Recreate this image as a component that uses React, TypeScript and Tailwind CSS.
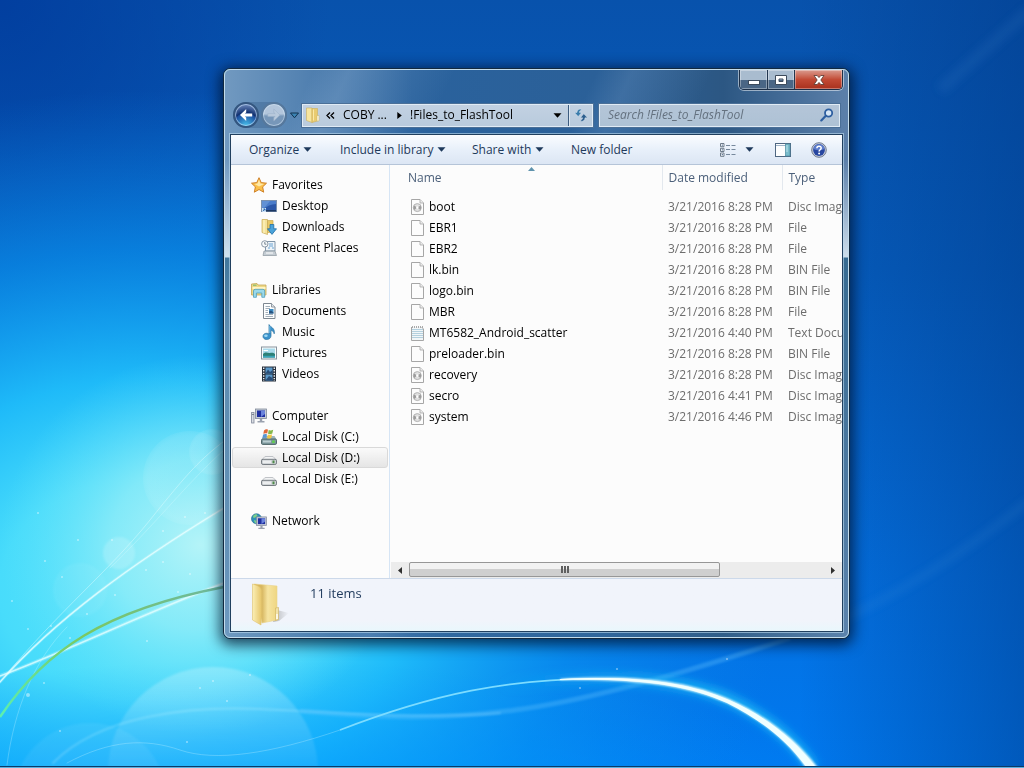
import type { ReactNode } from "react";

type FileKind = "disc" | "blank" | "text";

const files: { name: string; date: string; type: string; kind: FileKind }[] = [
	{ name: "boot", date: "3/21/2016 8:28 PM", type: "Disc Image File", kind: "disc" },
	{ name: "EBR1", date: "3/21/2016 8:28 PM", type: "File", kind: "blank" },
	{ name: "EBR2", date: "3/21/2016 8:28 PM", type: "File", kind: "blank" },
	{ name: "lk.bin", date: "3/21/2016 8:28 PM", type: "BIN File", kind: "blank" },
	{ name: "logo.bin", date: "3/21/2016 8:28 PM", type: "BIN File", kind: "blank" },
	{ name: "MBR", date: "3/21/2016 8:28 PM", type: "File", kind: "blank" },
	{ name: "MT6582_Android_scatter", date: "3/21/2016 4:40 PM", type: "Text Document", kind: "text" },
	{ name: "preloader.bin", date: "3/21/2016 8:28 PM", type: "BIN File", kind: "blank" },
	{ name: "recovery", date: "3/21/2016 8:28 PM", type: "Disc Image File", kind: "disc" },
	{ name: "secro", date: "3/21/2016 4:41 PM", type: "Disc Image File", kind: "disc" },
	{ name: "system", date: "3/21/2016 4:46 PM", type: "Disc Image File", kind: "disc" },
];

const sparks = [
	[163, 531, 1], [112, 540, 1], [190, 574, 1], [146, 570, 1], [115, 595, 1],
	[178, 592, 1], [62, 577, 1], [45, 561, 1], [78, 540, 1], [28, 629, 1],
	[51, 626, 1], [70, 638, 1], [147, 641, 1], [213, 681, 1], [200, 688, 1],
	[28, 695, 2], [44, 683, 1], [187, 742, 1], [227, 701, 1], [250, 675, 1],
	[87, 614, 1], [38, 513, 1], [185, 517, 1], [617, 669, 1], [727, 659, 1],
	[580, 688, 1], [12, 601, 1], [163, 562, 1], [205, 513, 1], [60, 731, 1],
];

function Wallpaper() {
	return (
		<svg
			className="absolute inset-0 h-full w-full"
			viewBox="0 0 1024 768"
			preserveAspectRatio="none"
			aria-hidden="true"
		>
			<defs>
				<linearGradient id="sky" x1="0" y1="0" x2="0" y2="1">
					<stop offset="0" stopColor="#0852ac" />
					<stop offset="0.35" stopColor="#065cbc" />
					<stop offset="0.75" stopColor="#0470e0" />
					<stop offset="1" stopColor="#0079f0" />
				</linearGradient>
				<linearGradient id="edge" x1="0" y1="0" x2="1" y2="0">
					<stop offset="0.78" stopColor="#003a88" stopOpacity="0" />
					<stop offset="1" stopColor="#003a88" stopOpacity="0.5" />
				</linearGradient>
				<radialGradient id="corner" gradientUnits="userSpaceOnUse" cx="0" cy="0" r="330">
					<stop offset="0" stopColor="#003a9c" stopOpacity="0.8" />
					<stop offset="1" stopColor="#003a9c" stopOpacity="0" />
				</radialGradient>
				<radialGradient
					id="cyan"
					gradientUnits="userSpaceOnUse"
					cx="0"
					cy="0"
					r="1"
					gradientTransform="translate(140 590) scale(640 500)"
				>
					<stop offset="0" stopColor="#5ce6fb" />
					<stop offset="0.22" stopColor="#48dcfb" />
					<stop offset="0.42" stopColor="#20bffb" stopOpacity="0.95" />
					<stop offset="0.68" stopColor="#0a93f0" stopOpacity="0.65" />
					<stop offset="1" stopColor="#0a80e8" stopOpacity="0" />
				</radialGradient>
				<radialGradient
					id="base"
					gradientUnits="userSpaceOnUse"
					cx="0"
					cy="0"
					r="1"
					gradientTransform="translate(260 840) scale(640 180)"
				>
					<stop offset="0" stopColor="#00a4ff" stopOpacity="0.9" />
					<stop offset="1" stopColor="#0090ff" stopOpacity="0" />
				</radialGradient>
				<radialGradient
					id="glow"
					gradientUnits="userSpaceOnUse"
					cx="0"
					cy="0"
					r="1"
					gradientTransform="translate(200 545) scale(200 190)"
				>
					<stop offset="0" stopColor="#b4f4f8" />
					<stop offset="0.45" stopColor="#94edf8" stopOpacity="0.75" />
					<stop offset="1" stopColor="#5cdffb" stopOpacity="0" />
				</radialGradient>
				<radialGradient id="orb">
					<stop offset="0" stopColor="#fff" stopOpacity="0.04" />
					<stop offset="0.9" stopColor="#fff" stopOpacity="0.1" />
					<stop offset="1" stopColor="#fff" stopOpacity="0.06" />
				</radialGradient>
				<linearGradient id="fade" x1="0" y1="0" x2="0" y2="1">
					<stop offset="0" stopColor="#fff" stopOpacity="0.24" />
					<stop offset="0.5" stopColor="#fff" stopOpacity="0.05" />
				</linearGradient>
				<linearGradient id="leaf" x1="0" y1="1" x2="1" y2="0">
					<stop offset="0" stopColor="#5cf0b0" />
					<stop offset="0.5" stopColor="#7cc860" />
					<stop offset="1" stopColor="#6cb8a0" />
				</linearGradient>
				<linearGradient id="halo" gradientUnits="userSpaceOnUse" x1="500" y1="0" x2="720" y2="0">
					<stop offset="0" stopColor="#20c8f8" stopOpacity="0" />
					<stop offset="1" stopColor="#20c8f8" stopOpacity="0.7" />
				</linearGradient>
				<filter id="soft" x="-20%" y="-20%" width="140%" height="140%">
					<feGaussianBlur stdDeviation="4" />
				</filter>
				<filter id="faint" x="-20%" y="-20%" width="140%" height="140%">
					<feGaussianBlur stdDeviation="1" />
				</filter>
			</defs>
			<rect width="1024" height="768" fill="url(#sky)" />
			<rect width="1024" height="768" fill="url(#corner)" />
			<rect width="1024" height="768" fill="url(#edge)" />
			<rect width="1024" height="768" fill="url(#cyan)" />
			<rect width="1024" height="768" fill="url(#base)" />
			<rect width="1024" height="768" fill="url(#glow)" />

			<g filter="url(#soft)" stroke="#7cc0f0" fill="none">
				<path d="M940 90 L1030 10" strokeWidth="12" opacity="0.08" />
				<path d="M830 625 C910 590 980 540 1030 500" strokeWidth="6" opacity="0.12" />
			</g>

			<circle cx="190" cy="478" r="47" fill="url(#orb)" />
			<circle cx="212" cy="452" r="23" fill="url(#orb)" />
			<circle cx="119" cy="553" r="16" fill="#fff" opacity="0.17" filter="url(#faint)" />
			<circle cx="80" cy="590" r="27" fill="#fff" opacity="0.05" filter="url(#faint)" />
			<circle cx="213" cy="772" r="105" fill="url(#fade)" filter="url(#faint)" />
			<circle cx="90" cy="800" r="77" fill="#fff" opacity="0.06" filter="url(#faint)" />

			<g fill="none" stroke="#e8ffff" strokeLinecap="round">
				<path d="M0 682 C55 620 130 565 224 508" strokeWidth="3" opacity="0.25" />
				<path d="M0 682 C55 620 130 565 224 508" strokeWidth="1.3" opacity="0.8" />
				<path d="M0 676 C70 650 140 615 224 583" strokeWidth="4" opacity="0.25" />
				<path d="M0 676 C70 650 140 615 224 583" strokeWidth="1.5" opacity="0.75" />
				<path d="M5 676 C60 610 110 570 150 520 S200 460 224 441" opacity="0.4" />
				<path d="M110 568 C150 530 190 480 224 450" opacity="0.25" />
				<path d="M7 765 C14 710 34 660 67 627" opacity="0.25" />
				<path d="M53 763 C100 715 190 706 260 709 S420 720 500 713" strokeWidth="2" opacity="0.22" filter="url(#faint)" />
				<path d="M67 763 C110 740 145 738 180 750 S270 754 340 730" opacity="0.25" />
			</g>
			<path
				d="M300 711 C380 718 440 720 515 710 S700 668 790 638"
				fill="none"
				stroke="#6cc8ff"
				strokeWidth="5"
				opacity="0.3"
				filter="url(#faint)"
			/>
			<path
				d="M0 717 C45 650 105 610 224 587"
				fill="none"
				stroke="url(#leaf)"
				strokeWidth="2.4"
			/>
			<path
				d="M500 686 C625 668 700 684 740 705 C775 724 798 745 813 768"
				fill="none"
				stroke="url(#halo)"
				strokeWidth="12"
				filter="url(#soft)"
			/>
			<path
				d="M340 730 C430 695 510 677 610 679"
				fill="none"
				stroke="#7cdcff"
				strokeWidth="1.8"
			/>
			<path
				d="M560 679 C640 674 690 682 729 699 C768 716 799 742 818 768 L806 768 C788 741 763 721 727 703 C688 686 640 679 560 680 Z"
				fill="#f0ffff"
				filter="url(#faint)"
			/>
			<path
				d="M560 679 C640 675 690 683 729 700 C768 717 798 743 816 768 L807 768 C788 742 763 721 727 703 C688 685 640 678 560 680 Z"
				fill="#f0ffff"
			/>
			{sparks.map(([x, y, r]) => (
				<circle key={`${x}-${y}`} cx={x} cy={y} r={r} fill="#fff" opacity="0.45" />
			))}
		</svg>
	);
}

function Icon({ children }: { children: ReactNode }) {
	return (
		<svg className="h-4 w-4 shrink-0" viewBox="0 0 16 16" aria-hidden="true">
			{children}
		</svg>
	);
}

const StarIcon = () => (
	<Icon>
		<path
			d="M8 0.7 L10.2 5.6 L15.5 6.2 L11.6 9.9 L12.7 15.2 L8 12.5 L3.3 15.2 L4.4 9.9 L0.5 6.2 L5.8 5.6 Z"
			fill="#fbc04a"
			stroke="#cf8129"
		/>
		<path d="M8 2.6 L9.4 6.5 L13 7 L8 9.5 L3.6 7 L6.5 6.5 Z" fill="#ffe9a8" />
	</Icon>
);

const DesktopIcon = () => (
	<Icon>
		<rect x="0.5" y="2.5" width="15" height="11" fill="#2b57a8" stroke="#7b90ad" />
		<path d="M1 3 H15 V6 C10 6 6 8 1 12 Z" fill="#4a7cca" />
		<path d="M1 3 H9 L4 9 L1 10 Z" fill="#7aa5e0" opacity="0.5" />
		<rect x="1" y="12" width="14" height="1.5" fill="#1b3762" />
		<path d="M1 10 H5 V14 H1 Z" fill="#cfe3f7" />
		<path d="M1.8 13 L4 11 M2.4 11 H4 V12.6" stroke="#2868b0" fill="none" />
	</Icon>
);

const DownloadsIcon = () => (
	<Icon>
		<path d="M1 0.5 H6.5 V15.5 L1 13.5 Z" fill="#f5e29a" stroke="#c8a951" strokeWidth="0.7" />
		<path d="M6.5 1.5 H12 V13.5 H6.5 Z" fill="#e8c866" stroke="#c8a951" strokeWidth="0.7" />
		<path d="M3 1 V14" stroke="#fff6c8" />
		<path
			d="M9 5.5 H12.8 V9.8 H15.5 L11 15.4 L6.5 9.8 H9 Z"
			fill="#4aa3da"
			stroke="#1f6fa8"
			strokeWidth="0.8"
		/>
	</Icon>
);

const RecentIcon = () => (
	<Icon>
		<path d="M4.5 1.5 H14 V11 H4.5 Z" fill="#eef4f9" stroke="#8296a9" />
		<path d="M8 4 H12 M8 6 H12 M7 8 H9 M11 8 H13" stroke="#6aa3d2" />
		<path d="M3 11 H14 L15.5 15.5 H2 Z" fill="#c4ccd3" stroke="#8b959e" strokeWidth="0.7" />
		<path d="M5 13 H12" stroke="#fff" />
		<circle cx="3.8" cy="3.9" r="3.2" fill="#f7fafc" stroke="#8b98a6" />
		<path d="M3.8 2 V4.2 H5.4" stroke="#5b6a79" fill="none" strokeWidth="0.8" />
	</Icon>
);

const LibrariesIcon = () => (
	<Icon>
		<path d="M0.5 2 L6 1.5 L7 3 H15 V13 H0.5 Z" fill="#efd987" stroke="#c5a756" strokeWidth="0.8" />
		<rect x="1.5" y="5" width="13" height="2" fill="#fff5c4" />
		<path d="M2 3.2 H5.5" stroke="#72b86a" />
		<path
			d="M2.5 15.3 V9 Q2.5 7.3 4.2 7.3 H12 Q13.7 7.3 13.7 9 V15.3 H10.8 V11 H5.4 V15.3 Z"
			fill="#9ad9ea"
			stroke="#4f9dbb"
			strokeWidth="0.8"
		/>
	</Icon>
);

const DocumentsIcon = () => (
	<Icon>
		<path d="M2.5 0.5 H10.5 L14 4 V15.5 H2.5 Z" fill="#fdfefe" stroke="#7d8790" />
		<path d="M10.5 0.5 V4 H14" fill="#dfe5ea" stroke="#7d8790" strokeWidth="0.8" />
		<path d="M4.5 3.5 H9 M4.5 5.5 H9 M4.5 7.5 H7 M4.5 9.5 H7 M4.5 11.5 H12 M4.5 13.5 H12" stroke="#a3afba" />
		<rect x="8" y="6" width="4.5" height="4.5" fill="#3c8cc4" />
		<path d="M8 8.5 L10 7.5 L12.5 9.5 V10.5 H8 Z" fill="#27527f" />
	</Icon>
);

const MusicIcon = () => (
	<Icon>
		<path
			d="M8 0.6 C9 3 14.4 3.8 13.2 9.8 C12.8 7.4 11.2 6.4 10 6.2 V11.8 C10 16.6 2 16.6 2 12.4 C2 9.2 6 8.6 8 10 Z"
			fill="#3b93cd"
			stroke="#26709f"
			strokeWidth="0.7"
		/>
		<ellipse cx="4.9" cy="11.8" rx="1.8" ry="1.3" fill="#9fd7f2" />
		<path d="M8.8 2 V9" stroke="#8ccbee" strokeWidth="0.8" />
	</Icon>
);

const PicturesIcon = () => (
	<Icon>
		<rect x="0.5" y="2" width="15" height="12" fill="#fafcfd" stroke="#87939d" />
		<rect x="2" y="3.5" width="12" height="9" fill="#a9dbec" />
		<path d="M2 9 C5 6 7 8.5 9 8 S13 8 14 9 V12.5 H2 Z" fill="#2d8077" />
		<path d="M2 10.8 H14 V12.5 H2 Z" fill="#39a3b9" />
		<path d="M2.5 5.5 H7" stroke="#fff" />
	</Icon>
);

const VideosIcon = () => (
	<Icon>
		<rect x="1" y="0.5" width="14" height="15" fill="#27303c" />
		<path d="M4.5 1.5 H11.5 V7.5 H4.5 Z M4.5 8.5 H11.5 V14.5 H4.5 Z" fill="#5a98c9" />
		<path d="M4.5 7.5 L7 3.5 L9 6 L11.5 4 V7.5 Z M4.5 14.5 L8 10 L11.5 12 V14.5 Z" fill="#284d78" />
		<path d="M2.7 1.5 V15 M13.3 1.5 V15" stroke="#e9eef2" strokeWidth="1.4" strokeDasharray="1.4 1.2" />
	</Icon>
);

const Monitor = () => (
	<>
		<rect x="4.5" y="1" width="11" height="9.5" fill="#c5cbd6" stroke="#818a9b" strokeWidth="0.8" />
		<rect x="6" y="2.5" width="8" height="6.5" fill="#1f2fa0" />
		<path d="M10 2.5 H14 V6 L10 9 Z" fill="#6a83dc" />
		<path d="M8.8 11 H11.2 V13 H13.5 V14.5 H6.5 V13 H8.8 Z" fill="#9aa1ae" />
	</>
);

const ComputerIcon = () => (
	<Icon>
		<Monitor />
		<rect x="0.6" y="4.5" width="2.4" height="10.5" fill="#d9dde3" stroke="#80889a" strokeWidth="0.8" />
		<path d="M1 6.5 H3" stroke="#6b7280" strokeWidth="0.8" />
	</Icon>
);

const NetworkIcon = () => (
	<Icon>
		<circle cx="5.5" cy="5.8" r="5" fill="#2f90b8" stroke="#256f95" strokeWidth="0.7" />
		<path d="M2 3 C4 0.5 6 1 6.5 2.5 C5 4 4.5 5 2.5 5 Z M3 7 L6 8 L5 10.5 C4 10 3 9 3 7 Z" fill="#7bd18b" />
		<g transform="translate(1.5 3) scale(0.9)">
			<Monitor />
		</g>
	</Icon>
);

const DiskIcon = () => (
	<Icon>
		<path d="M3 7.5 Q3.5 6.5 5 6.5 H11 Q12.5 6.5 13 7.5 L15.5 10 H0.5 Z" fill="#f3f4f5" stroke="#a7acb1" strokeWidth="0.7" />
		<rect x="0.5" y="9.3" width="15" height="5.2" rx="1.6" fill="#cfd3d6" stroke="#767c82" />
		<rect x="2" y="10.6" width="8" height="2.4" fill="#eceeef" />
		<rect x="11.5" y="10.5" width="2" height="2.8" fill="#4f8a4a" />
	</Icon>
);

const SystemDiskIcon = () => (
	<Icon>
		<path d="M2.5 7 H13.5 L15.5 10.5 H0.5 Z" fill="#9db6bd" />
		<rect x="0.5" y="10" width="15" height="5.4" rx="1.2" fill="#7d979c" stroke="#4f6669" />
		<rect x="2" y="11.5" width="8" height="2" fill="#b9cdd0" />
		<rect x="11.2" y="11.4" width="2.5" height="2.6" fill="#5fd04c" />
		<path d="M3 1.4 C4.5 0.1 5.5 0.1 7 0.8 L6.2 4.6 C5 4 4 4 2.3 4.8 Z" fill="#e2693a" />
		<path d="M7.7 1.1 C9.3 1.8 10.5 1.6 12.2 0.8 L11.3 4.5 C9.7 5.3 8.5 5.3 7 4.8 Z" fill="#84b84a" />
		<path d="M2.1 5.5 C3.5 4.8 4.6 4.8 6 5.4 L5.2 9.2 C4 8.6 3 8.6 1.3 9.4 Z" fill="#5a96d2" />
		<path d="M6.8 5.6 C8.3 6.2 9.6 6.1 11.1 5.3 L10.3 9.1 C9 9.7 7.6 9.8 6 9.3 Z" fill="#f2c744" />
	</Icon>
);

function FileIcon({ kind }: { kind: FileKind }) {
	return (
		<Icon>
			<path d="M1.5 0.5 H10 L13.5 4 V15.5 H1.5 Z" fill={kind === "text" ? "#f2f6f8" : "#fcfcfc"} stroke="#a6a6a6" />
			{kind !== "text" && <path d="M10 0.5 V4 H13.5" fill="#ececec" stroke="#a6a6a6" strokeWidth="0.8" />}
			{kind === "text" && (
				<>
					<path d="M2 4.5 H13 M2 6.5 H13 M2 8.5 H13 M2 10.5 H13 M2 12.5 H13" stroke="#b4d0de" />
					<path d="M1 1 H14" stroke="#fcfcfc" strokeWidth="2" />
					<path d="M2.5 1 V3 M4.5 1 V3 M6.5 1 V3 M8.5 1 V3 M10.5 1 V3 M12.5 1 V3" stroke="#aaa" />
				</>
			)}
			{kind === "disc" && (
				<>
					<circle cx="7.3" cy="8.6" r="4" fill="#e0e0e0" stroke="#b4b4b4" />
					<path d="M7.3 8.6 L4 6.6 A4 4 0 0 0 4.3 11 Z M7.3 8.6 L10.6 6.6 A4 4 0 0 1 10.3 11 Z" fill="#9c9c9c" />
					<circle cx="7.3" cy="8.6" r="1.2" fill="#fff" />
				</>
			)}
		</Icon>
	);
}

const places: { label: string; icon: ReactNode; items: { label: string; icon: ReactNode }[] }[] = [
	{
		label: "Favorites",
		icon: <StarIcon />,
		items: [
			{ label: "Desktop", icon: <DesktopIcon /> },
			{ label: "Downloads", icon: <DownloadsIcon /> },
			{ label: "Recent Places", icon: <RecentIcon /> },
		],
	},
	{
		label: "Libraries",
		icon: <LibrariesIcon />,
		items: [
			{ label: "Documents", icon: <DocumentsIcon /> },
			{ label: "Music", icon: <MusicIcon /> },
			{ label: "Pictures", icon: <PicturesIcon /> },
			{ label: "Videos", icon: <VideosIcon /> },
		],
	},
	{
		label: "Computer",
		icon: <ComputerIcon />,
		items: [
			{ label: "Local Disk (C:)", icon: <SystemDiskIcon /> },
			{ label: "Local Disk (D:)", icon: <DiskIcon /> },
			{ label: "Local Disk (E:)", icon: <DiskIcon /> },
		],
	},
	{ label: "Network", icon: <NetworkIcon />, items: [] },
];

function Caret({ className = "" }: { className?: string }) {
	return (
		<svg className={`h-[5px] w-[9px] shrink-0 ${className}`} viewBox="0 0 9 5" aria-hidden="true">
			<path d="M0.5 0.3 H8.5 L4.5 4.8 Z" fill="currentColor" />
		</svg>
	);
}

function CaptionButtons() {
	return (
		<div className="flex h-5 overflow-hidden rounded-b-[5px] border border-t-0 border-[#1d2f47] shadow-[0_0_0_1px_rgba(255,255,255,0.5)]">
			<button
				type="button"
				aria-label="Minimize"
				className="flex w-7 items-center justify-center border-r border-[#22364f] bg-linear-to-b from-[#a9bccf] from-50% to-[#4a6685] to-50% shadow-[inset_0_0_0_1px_rgba(255,255,255,0.35)]"
			>
				<svg className="h-3 w-3" viewBox="0 0 12 12" aria-hidden="true">
					<rect x="0.5" y="6.5" width="11" height="4" fill="#fff" stroke="#3d4b5c" />
				</svg>
			</button>
			<button
				type="button"
				aria-label="Maximize"
				className="flex w-[27px] items-center justify-center border-r border-[#22364f] bg-linear-to-b from-[#a9bccf] from-50% to-[#4a6685] to-50% shadow-[inset_0_0_0_1px_rgba(255,255,255,0.35)]"
			>
				<svg className="h-3 w-3" viewBox="0 0 12 12" aria-hidden="true">
					<path d="M0.5 1.5 H11.5 V10.5 H0.5 Z M4 5 V7.5 H8 V5 Z" fill="#fff" stroke="#3d4b5c" fillRule="evenodd" />
				</svg>
			</button>
			<button
				type="button"
				aria-label="Close"
				className="flex w-[47px] items-center justify-center bg-linear-to-b from-[#d99a8e] via-[#c24a35] via-50% to-[#a8301d] shadow-[inset_0_0_0_1px_rgba(255,255,255,0.35)]"
			>
				<svg className="h-3 w-3" viewBox="0 0 12 12" aria-hidden="true">
					<path
						d="M1 1.5 H4.2 L6 3.6 L7.8 1.5 H11 L7.8 6 L11 10.5 H7.8 L6 8.4 L4.2 10.5 H1 L4.2 6 Z"
						fill="#fff"
						stroke="#56372f"
						strokeWidth="0.8"
					/>
				</svg>
			</button>
		</div>
	);
}

function TravelButtons() {
	return (
		<div className="flex items-center">
			<div className="flex h-[26px] items-center gap-0.5 rounded-full bg-[#3f6793]/50">
				<button
					type="button"
					aria-label="Back"
					className="flex h-[26px] w-[26px] items-center justify-center rounded-full border-2 border-[#34567f] bg-[radial-gradient(circle_at_50%_100%,#49c3ee_0%,#1d4f9f_50%,#11306f_55%,#8fa9d8_100%)] shadow-[inset_0_0_0_1px_rgba(200,225,250,0.6)]"
				>
					<svg className="h-[14px] w-[14px]" viewBox="0 0 14 14" aria-hidden="true">
						<path d="M7.2 1 L1 7 L7.2 13 V9.4 L5.8 8.4 H13.2 V5.6 H5.8 L7.2 4.6 Z" fill="#fff" />
					</svg>
				</button>
				<button
					type="button"
					aria-label="Forward"
					className="flex h-[26px] w-[26px] items-center justify-center rounded-full border-2 border-[#56789c] bg-linear-to-b from-[#b3c6dc] from-45% to-[#7797b9] to-55% shadow-[inset_0_0_0_1px_rgba(220,235,250,0.5)]"
				>
					<svg className="h-[14px] w-[14px]" viewBox="0 0 14 14" aria-hidden="true">
						<path d="M6.8 1 L13 7 L6.8 13 V9.4 L8.2 8.4 H0.8 V5.6 H8.2 L6.8 4.6 Z" fill="#b9cadd" stroke="#9ab0c8" strokeWidth="0.5" />
					</svg>
				</button>
			</div>
			<button type="button" aria-label="Recent pages" className="ml-[3px] h-[7px] w-[9px]">
				<svg className="block h-[7px] w-[9px]" viewBox="0 0 9 7" aria-hidden="true">
					<path d="M0.5 1 H8.5 L4.5 5.8 Z" fill="#3b84b4" stroke="#12324f" />
				</svg>
			</button>
		</div>
	);
}

function AddressBar() {
	return (
		<div className="flex h-[23px] min-w-0 flex-1 items-center border border-[#e0ebf5] bg-linear-to-b from-[#c2d1e2] to-[#b9cbdd] text-black shadow-[0_0_0_1px_#4a6f97]">
			<svg className="ml-[3px] h-4 w-[14px] shrink-0" viewBox="0 0 14 16" aria-hidden="true">
				<path d="M0.5 1 H6 V15.5 L0.5 13.5 Z" fill="#f7e59e" stroke="#cdb05c" strokeWidth="0.6" />
				<path d="M6 1.5 H11.5 V14 L6 15.5 Z" fill="#e9cb70" stroke="#cdb05c" strokeWidth="0.6" />
				<path d="M11 8.5 H13 V14 H11 Z" fill="#fbf7e6" stroke="#cdb05c" strokeWidth="0.5" />
				<path d="M7.5 2.5 V13.5" stroke="#fbe9a8" />
			</svg>
			<button type="button" aria-label="Parent folders" className="ml-[6px]">
				<svg className="h-[7px] w-[9px]" viewBox="0 0 9 7" aria-hidden="true">
					<path d="M4 0.5 L1 3.5 L4 6.5 M8 0.5 L5 3.5 L8 6.5" fill="none" stroke="#000" strokeWidth="1.3" />
				</svg>
			</button>
			<button type="button" className="ml-2 w-[43px] text-left whitespace-nowrap">
				COBY ...
			</button>
			<svg className="ml-[11px] h-[7px] w-[5px]" viewBox="0 0 5 7" aria-hidden="true">
				<path d="M0.3 0 L4.8 3.5 L0.3 7 Z" fill="#000" />
			</svg>
			<button type="button" className="ml-2 whitespace-nowrap">
				!Files_to_FlashTool
			</button>
			<button type="button" aria-label="Previous locations" className="mr-1.5 ml-auto">
				<Caret />
			</button>
			<button
				type="button"
				aria-label="Refresh"
				className="flex h-full w-6 items-center justify-center border-l border-[#3c5c80] shadow-[inset_1px_0_0_#dbe7f2]"
			>
				<svg className="h-[14px] w-[14px]" viewBox="0 0 14 14" aria-hidden="true">
					<path d="M7.2 1 C4.8 1 3 2 3 4.5 H0.5 L4.2 8.5 L7.6 4.5 H5.4 C5.4 3 6.2 2.6 7.2 2.6 Z" fill="#3a7cab" stroke="#e6f1f9" strokeWidth="0.4" />
					<path d="M6.8 13.4 C9.2 13.4 11 12.4 11 9.8 H13.5 L9.8 5.8 L6.4 9.8 H8.6 C8.6 11.4 7.8 11.8 6.8 11.8 Z" fill="#2d5f8f" stroke="#e6f1f9" strokeWidth="0.4" />
				</svg>
			</button>
		</div>
	);
}

function SearchBox() {
	return (
		<label className="ml-[3px] flex h-[23px] w-[241px] items-center border border-[#e0ebf5] bg-linear-to-b from-[#b4c5d8] to-[#aec2d5] pr-[5px] pl-2 shadow-[0_0_0_1px_#4a6f97]">
			<input
				type="text"
				aria-label="Search"
				placeholder="Search !Files_to_FlashTool"
				className="min-w-0 flex-1 bg-transparent italic outline-none placeholder:text-[#64717f]"
			/>
			<svg className="h-[14px] w-[14px] shrink-0" viewBox="0 0 14 14" aria-hidden="true">
				<circle cx="8.6" cy="5" r="3.6" fill="#d7e6f5" stroke="#2e5fa0" strokeWidth="1.8" />
				<path d="M5.8 7.8 L1.3 12.4" stroke="#2e5fa0" strokeWidth="2.2" strokeLinecap="round" />
			</svg>
		</label>
	);
}

function Toolbar() {
	return (
		<div className="flex h-[30px] shrink-0 items-center border-b border-[#b5c4d8] bg-linear-to-b from-[#fafcff] via-[#e8f0fa] via-50% to-[#dce6f4] pl-[18px] text-[#1e395b]">
			<button type="button" className="flex w-[91px] items-center gap-1 whitespace-nowrap">
				Organize <Caret />
			</button>
			<button type="button" className="flex w-[132px] items-center gap-1 whitespace-nowrap">
				Include in library <Caret />
			</button>
			<button type="button" className="flex w-[99px] items-center gap-1 whitespace-nowrap">
				Share with <Caret />
			</button>
			<button type="button" className="whitespace-nowrap">
				New folder
			</button>
			<div className="mr-[15px] ml-auto flex items-center">
				<button type="button" aria-label="Change your view" className="flex items-center gap-[9px]">
					<svg className="h-[14px] w-4" viewBox="0 0 16 14" aria-hidden="true">
						<path d="M0.5 0.5 H4 V3.7 H0.5 Z M0.5 5.3 H4 V8.5 H0.5 Z M0.5 10 H4 V13.3 H0.5 Z" fill="#fff" stroke="#6c7a89" />
						<path d="M1.7 2.1 H3 M1.7 6.9 H3 M1.7 11.7 H3" stroke="#41618c" />
						<path d="M6 2.5 H10 M11.5 2.5 H15.5 M6 6.5 H10 M11.5 6.5 H15.5 M6 11.5 H10 M11.5 11.5 H15.5" stroke="#76889c" />
					</svg>
					<Caret />
				</button>
				<button type="button" aria-label="Show the preview pane" className="ml-[21px]">
					<svg className="block h-[14px] w-4" viewBox="0 0 16 14" aria-hidden="true">
						<rect x="0.5" y="0.5" width="15" height="13" fill="#fdfefe" stroke="#4f6781" />
						<path d="M1 2.5 H11" stroke="#9fb4c8" />
						<rect x="10.5" y="1" width="4.5" height="12" fill="#79bccb" stroke="#4b8ba0" strokeWidth="0.7" />
						<path d="M12 2 V9" stroke="#bfe6ee" />
					</svg>
				</button>
				<button type="button" aria-label="Get help" className="ml-5">
					<svg className="block h-4 w-4" viewBox="0 0 16 16" aria-hidden="true">
						<circle cx="8" cy="8" r="7.3" fill="#c9ced9" stroke="#707b90" />
						<circle cx="8" cy="8" r="5.9" fill="#2746a0" />
						<path d="M2.4 7 A5.7 5.7 0 0 1 13.6 7 C10 8.6 6 8.6 2.4 7 Z" fill="#5c7ccb" />
						<path d="M5.9 6.3 C5.9 3.5 10.2 3.6 10.2 6.1 C10.2 7.8 8.1 7.7 8.1 9.4" fill="none" stroke="#fff" strokeWidth="1.5" />
						<circle cx="8.1" cy="11.6" r="1" fill="#fff" />
					</svg>
				</button>
			</div>
		</div>
	);
}

function NavigationPane() {
	return (
		<nav className="flex w-[159px] shrink-0 flex-col gap-[21px] border-r border-[#d6e5f5] pt-[9px]">
			{places.map((place) => (
				<div key={place.label}>
					<a href="#" className="flex h-[21px] items-center gap-[5px] pl-5 whitespace-nowrap">
						{place.icon}
						{place.label}
					</a>
					{place.items.map((item) => (
						<a
							key={item.label}
							href="#"
							className={`mx-px flex h-[21px] items-center gap-[5px] rounded-[3px] border pl-7 whitespace-nowrap ${
								item.label === "Local Disk (D:)"
									? "border-[#d9d9d9] bg-linear-to-b from-[#fafafa] to-[#e5e5e5]"
									: "border-transparent"
							}`}
						>
							{item.icon}
							{item.label}
						</a>
					))}
				</div>
			))}
		</nav>
	);
}

function FileList() {
	return (
		<div className="flex-1 overflow-hidden">
			<table className="w-full table-fixed border-collapse whitespace-nowrap">
				<colgroup>
					<col className="w-[272px]" />
					<col className="w-[120px]" />
					<col />
				</colgroup>
				<thead>
					<tr className="h-[25px] text-left text-[#4c607a]">
						<th className="relative pl-[18px] font-normal">
							Name
							<svg className="absolute top-[2px] left-[138px] h-1 w-[7px]" viewBox="0 0 7 4" aria-hidden="true">
								<path d="M0 4 L3.5 0 L7 4 Z" fill="#5f93ad" />
							</svg>
						</th>
						<th className="border-l border-[#e3e8ee] pl-1.5 font-normal">Date modified</th>
						<th className="border-l border-[#e3e8ee] pl-1.5 font-normal">Type</th>
					</tr>
				</thead>
				<tbody className="text-[#6d6d6d] before:block before:h-1.5">
					{files.map((file) => (
						<tr key={file.name} className="h-[21px]">
							<td className="p-0 pl-5">
								<span className="flex items-center gap-[3px] text-black">
									<FileIcon kind={file.kind} />
									{file.name}
								</span>
							</td>
							<td className="p-0 pl-1.5">{file.date}</td>
							<td className="overflow-hidden p-0 pl-1.5">{file.type}</td>
						</tr>
					))}
				</tbody>
			</table>
		</div>
	);
}

function HorizontalScrollbar() {
	return (
		<div className="ml-px flex h-4 shrink-0 bg-[#ececec]">
			<button type="button" aria-label="Scroll left" className="flex w-[18px] items-center justify-center">
				<svg className="h-[7px] w-1" viewBox="0 0 4 7" aria-hidden="true">
					<path d="M4 0 L0 3.5 L4 7 Z" fill="#303030" />
				</svg>
			</button>
			<div className="flex-1">
				<div className="flex h-[15px] w-[75%] items-center justify-center gap-px rounded-[2px] border border-[#979797] bg-linear-to-b from-[#f2f2f2] from-45% to-[#cfcfcf] to-50%">
					<span className="h-[7px] w-0.5 bg-[#606060]" />
					<span className="h-[7px] w-0.5 bg-[#606060]" />
					<span className="h-[7px] w-0.5 bg-[#606060]" />
				</div>
			</div>
			<button type="button" aria-label="Scroll right" className="flex w-[18px] items-center justify-center">
				<svg className="h-[7px] w-1" viewBox="0 0 4 7" aria-hidden="true">
					<path d="M0 0 L4 3.5 L0 7 Z" fill="#303030" />
				</svg>
			</button>
		</div>
	);
}

function DetailsPane() {
	return (
		<div className="flex h-[53px] shrink-0 items-start border-t border-[#ccd9ea] bg-linear-to-b from-[#f1f4fb] from-80% to-[#e9f7fc] pt-1 pl-5 text-[13px] text-[#1e395b]">
			<svg className="h-[44px] w-[40px] shrink-0" viewBox="0 0 40 44" aria-hidden="true">
				<defs>
					<linearGradient id="flap" x1="0" y1="0" x2="1" y2="0">
						<stop offset="0" stopColor="#fbefb6" />
						<stop offset="1" stopColor="#e6c569" />
					</linearGradient>
					<linearGradient id="back" x1="0" y1="0" x2="1" y2="0">
						<stop offset="0" stopColor="#d9b453" />
						<stop offset="0.35" stopColor="#d8b862" />
						<stop offset="0.6" stopColor="#f6e4a0" />
						<stop offset="1" stopColor="#efd682" />
					</linearGradient>
					<linearGradient id="cast" x1="0" y1="0" x2="1" y2="0">
						<stop offset="0" stopColor="#777" stopOpacity="0.5" />
						<stop offset="1" stopColor="#777" stopOpacity="0" />
					</linearGradient>
				</defs>
				<path d="M26 27 L38 30 L28 38 L22 39 Z" fill="url(#cast)" />
				<path d="M3 1 L26 3 V37 L11 40 Z" fill="url(#back)" stroke="#e9d48c" strokeWidth="0.6" />
				<path d="M24.5 25 L27.5 24.5 V36.5 L24.5 37.5 Z" fill="#f3e3a8" stroke="#cdb05c" strokeWidth="0.6" />
				<path d="M26 31 V36" stroke="#fff" strokeWidth="1.4" />
				<path d="M1.5 1 Q10 3 10.5 7 V28 L10 42 L1.5 37 Z" fill="url(#flap)" stroke="#dfc16c" strokeWidth="0.6" />
			</svg>
			<p className="ml-[19px] leading-5">11 items</p>
		</div>
	);
}

export default function App() {
	return (
		<main className="relative h-screen overflow-hidden bg-[#065cbc] font-['Open_Sans','Noto_Sans',sans-serif] text-xs leading-4 text-black">
			<Wallpaper />
			<section
				aria-label="!Files_to_FlashTool"
				className="absolute top-[68px] right-[174px] bottom-[129px] left-[223px] flex flex-col rounded-[7px] border border-[#12293f] bg-[#4c8cab] shadow-[0_3px_14px_3px_rgba(0,15,40,0.75)]"
			>
				<div className="flex flex-1 flex-col overflow-hidden rounded-[6px] border border-[#c3dcec] bg-[linear-gradient(115deg,transparent_10%,rgba(160,190,220,0.25)_14%,transparent_26%,transparent_42%,rgba(120,160,205,0.25)_46%,transparent_55%),linear-gradient(to_bottom,transparent_0,transparent_90px,rgba(225,238,246,0.85)_187px,rgba(25,90,125,0.55)_188px,rgba(90,160,190,0.1)_100%),linear-gradient(to_right,#7199c0,#2a629d_30%,#2b6098_60%,#2c5783_80%,#5c80aa)] px-[5px] pb-[5px]">
					<div className="flex h-5 shrink-0 justify-end">
						<CaptionButtons />
					</div>
					<div className="flex h-[44px] shrink-0 items-center gap-[3px] pt-[6px] pr-[3px] pl-[3px]">
						<TravelButtons />
						<AddressBar />
						<SearchBox />
					</div>
					<div className="flex min-h-0 flex-1 flex-col border border-[#203f5e] bg-[#fcfcfc] shadow-[0_0_0_1px_rgba(190,220,240,0.6)]">
						<Toolbar />
						<div className="flex min-h-0 flex-1">
							<NavigationPane />
							<div className="flex min-w-0 flex-1 flex-col">
								<FileList />
								<HorizontalScrollbar />
							</div>
						</div>
						<DetailsPane />
					</div>
				</div>
			</section>
			<div className="absolute inset-x-0 bottom-0 h-0.5 border-t border-[#0b3a66] bg-[#5ab0e0]" />
		</main>
	);
}
